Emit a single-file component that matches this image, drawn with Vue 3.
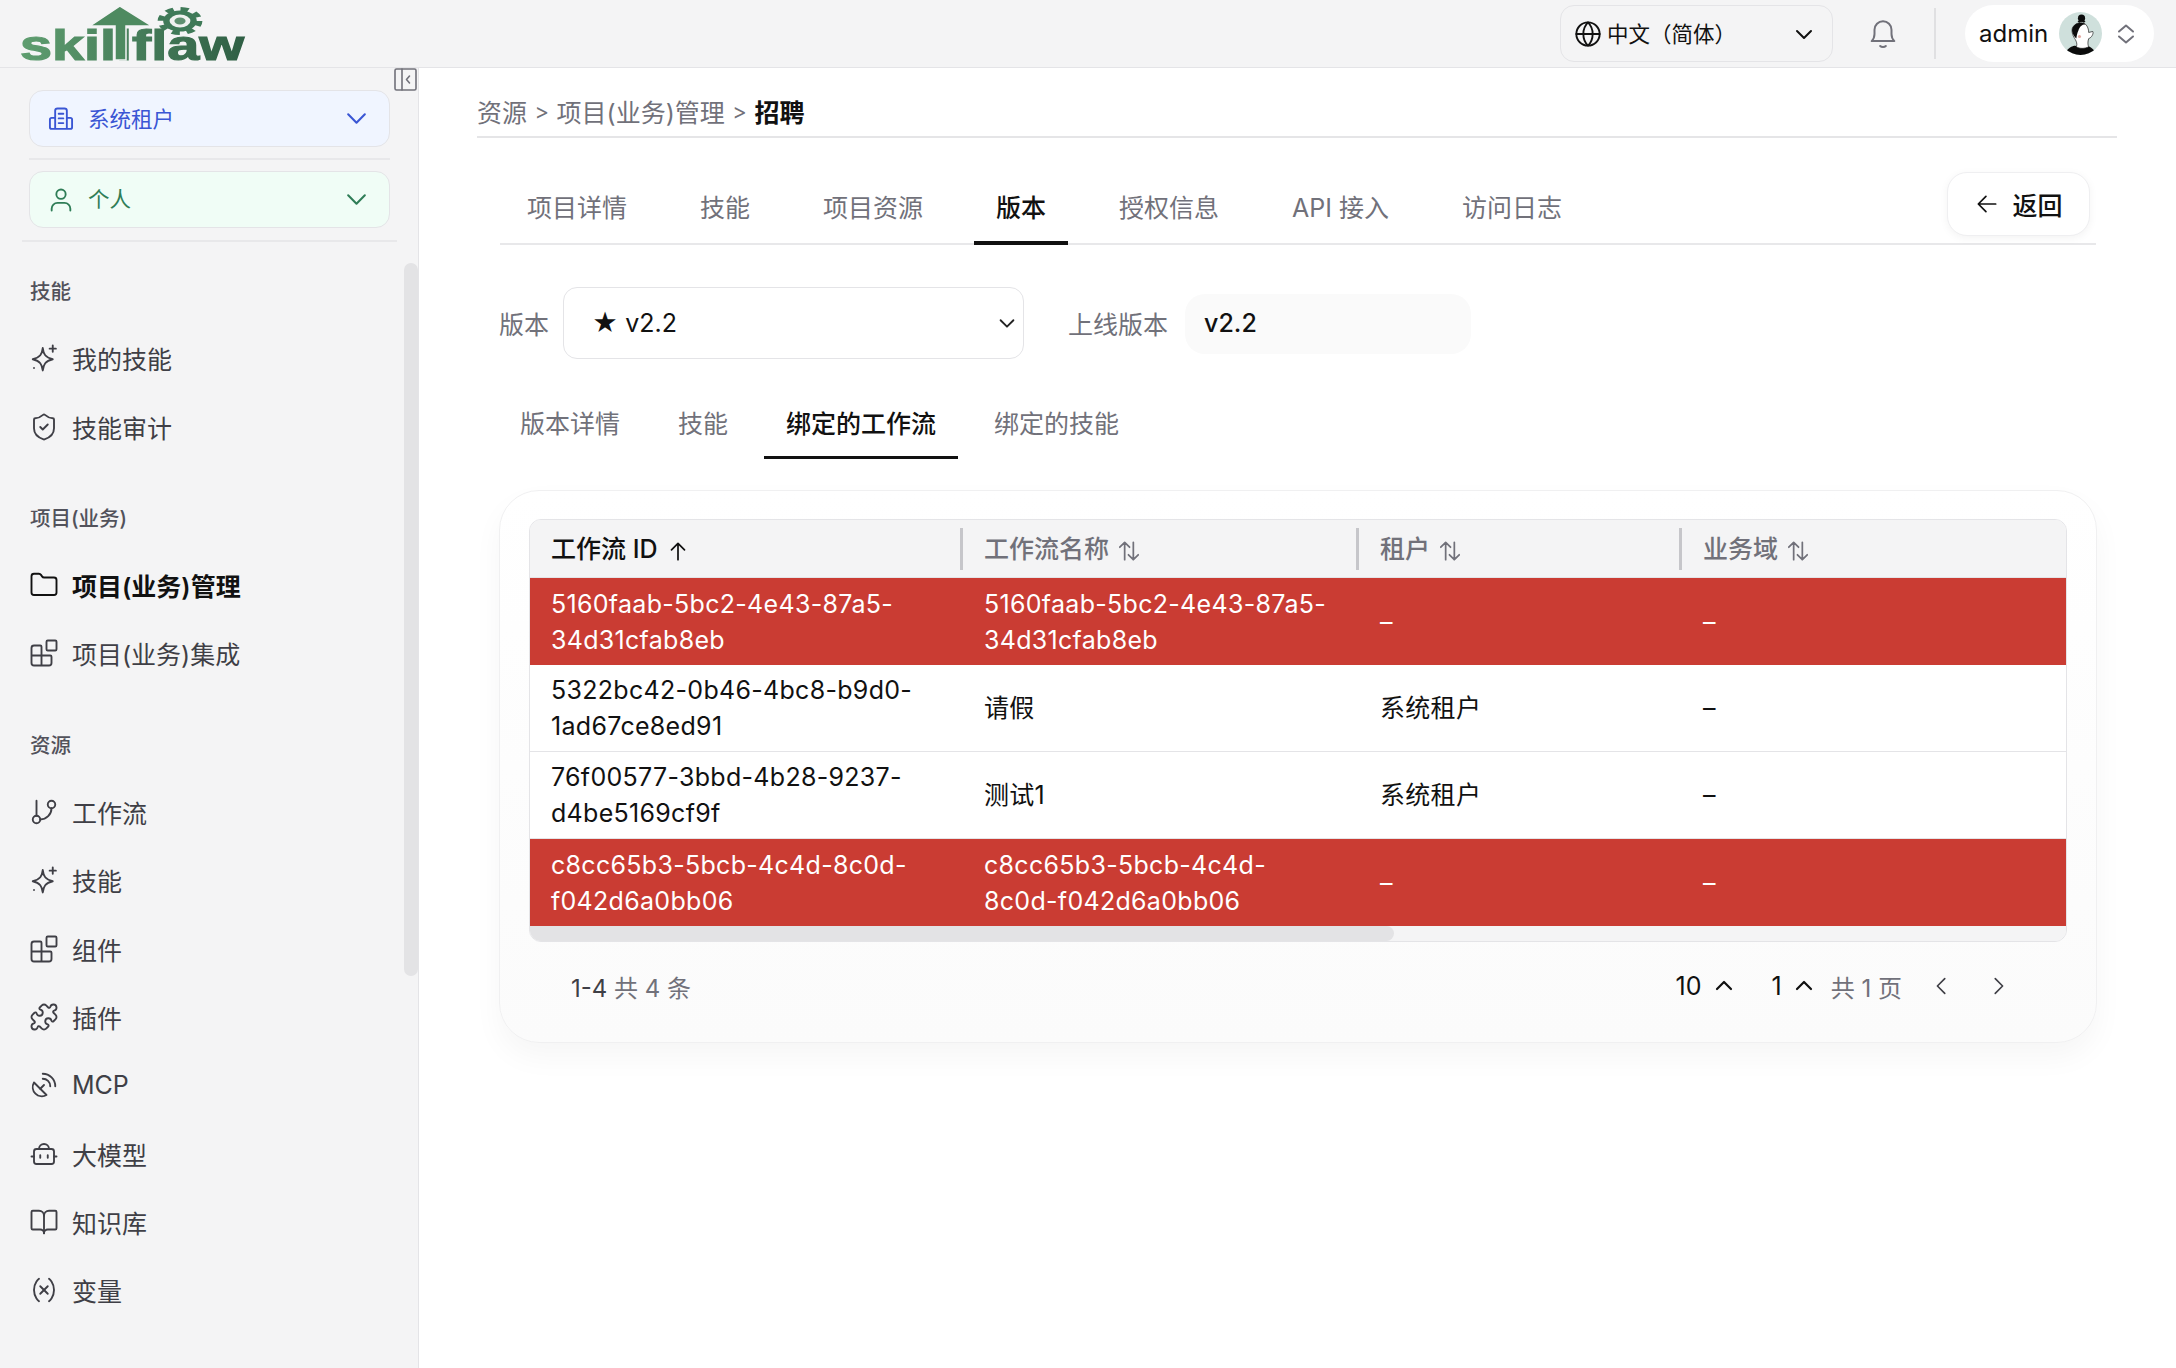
<template>
  <div class="app">
    <header class="topbar">
      <svg class="logo" viewBox="0 -6 230 70" width="230" height="70">
        <defs>
          <linearGradient id="logoFill" x1="0" x2="1" y1="0" y2="0">
            <stop offset="0" stop-color="#5f9e70" />
            <stop offset="1" stop-color="#2f5f45" />
          </linearGradient>
        </defs>
        <text x="0" y="54" class="logo-text" textLength="224" lengthAdjust="spacingAndGlyphs" fill="url(#logoFill)">skillflaw</text>
        <path d="M70 20 L100 0 L132 20 H106 V54 H95 V20Z" fill="#4e8a60" stroke="#f4f4f5" stroke-width="1.5" />
        <g transform="translate(160 15) scale(1.6 1)">
          <circle r="12" fill="none" stroke="#3f7a58" stroke-width="4" stroke-dasharray="5 4.420" />
          <circle r="10.500" fill="#3f7a58" />
          <circle r="6.500" fill="#f0f2f0" />
          <circle r="3.500" fill="#5f9070" />
        </g>
      </svg>
      <div class="top-right">
        <div class="lang">
          <svg class="ic" viewBox="0 0 24 24" width="28" height="28"><circle cx="12" cy="12" r="10" /><path d="M2 12h20M12 2c3 3 4 6.500 4 10s-1 7-4 10c-3-3-4-6.500-4-10s1-7 4-10Z" /></svg>
          <span class="lang-text">中文（简体）</span>
          <svg class="ic chev-lang" viewBox="0 0 24 24" width="24" height="24"><path d="m5 9 7 7 7-7" /></svg>
        </div>
        <svg class="ic bell" viewBox="0 0 24 24" width="34" height="34"><path d="M4 17h16c-1.500-1.500-2-3-2-5V9a6 6 0 0 0-12 0v3c0 2-.5 3.500-2 5Z" /><path d="M10 20.500c1 1 3 1 4 0" /></svg>
        <span class="top-sep"></span>
        <div class="user">
          <span class="user-name">admin</span>
          <svg class="avatar" viewBox="0 0 42 42" width="43" height="43">
            <clipPath id="avatarClip"><circle cx="21" cy="21" r="21" /></clipPath>
            <g clip-path="url(#avatarClip)">
              <rect width="42" height="42" fill="#cfe0dc" />
              <path d="M5 42c3-7 8-9 11-9 3 2 7 2 10 0 3 0 8 2 11 9Z" fill="#0b0b0b" />
              <path d="M17 34c1-3 0-5-1-7-2-3-4-7-3-11 2-5 8-7 13-4 2 2 3 5 3 8l4-1c1 2-1 6-4 7-1 3-1 6 0 8-4 2-9 2-12 0Z" fill="#fff" stroke="#222" stroke-width=".7" />
              <path d="M13 16c2-5 8-7 13-4-4 0-6 3-7 6-1 2-2 6-2 8-3-3-5-7-4-10Z" fill="#0b0b0b" />
              <circle cx="22" cy="6" r="3.500" fill="#0b0b0b" />
              <path d="M19 10c1-2 5-2 6 0" stroke="#0b0b0b" stroke-width="2" fill="none" />
              <circle cx="20" cy="24" r="1.500" fill="#e2a9a0" />
            </g>
          </svg>
          <svg class="ic updown" viewBox="0 0 24 24" width="24" height="24"><path d="m5 9.500 7-6 7 6M5 14.500l7 6 7-6" /></svg>
        </div>
      </div>
    </header>

    <div class="body">
      <aside class="sidebar">
        <button class="collapse" type="button">
          <svg class="ic" viewBox="0 0 23 23" width="23" height="23"><rect x="1" y="1" width="21" height="21" rx="1.500" /><path d="M8 1v21M15.500 8l-3 3.500 3 3.500" /></svg>
        </button>
        <div class="scope scope-blue">
          <svg class="ic" viewBox="0 0 24 24" width="28" height="28"><path d="M7 20V5a2 2 0 0 1 2-2h6a2 2 0 0 1 2 2v15M7 11H4a1.500 1.500 0 0 0-1.500 1.500V19A1.500 1.500 0 0 0 4 20.500h16a1.500 1.500 0 0 0 1.500-1.500v-6.500A1.500 1.500 0 0 0 20 11h-3M10 7.500h4M10 11.500h4M10 15.500h4" /></svg>
          <span class="scope-name">系统租户</span>
          <svg class="ic scope-chev" viewBox="0 0 24 24" width="25" height="25"><path d="m4 8 8 8 8-8" /></svg>
        </div>
        <div class="side-line"></div>
        <div class="scope scope-green">
          <svg class="ic" viewBox="0 0 24 24" width="28" height="28"><circle cx="12" cy="7" r="4" /><path d="M4 21v-1.500a5 5 0 0 1 5-5h6a5 5 0 0 1 5 5V21" /></svg>
          <span class="scope-name">个人</span>
          <svg class="ic scope-chev" viewBox="0 0 24 24" width="25" height="25"><path d="m4 8 8 8 8-8" /></svg>
        </div>
        <div class="side-line wide"></div>

        <nav class="nav">
          <section v-for="group in navGroups" :key="group.title" class="nav-group">
            <div class="nav-title">{{ group.title }}</div>
            <div v-for="item in group.items" :key="item.label" class="nav-item" :class="{ active: item.active }">
              <svg class="ic nav-ic" viewBox="0 0 24 24" width="30" height="30">
                <path v-for="d in icons[item.icon]" :key="d" :d="d" />
              </svg>
              <span>{{ item.label }}</span>
            </div>
          </section>
        </nav>
        <div class="side-scroll"></div>
      </aside>

      <main class="content">
        <div class="crumbs">
          <span>资源</span><i>&gt;</i><span>项目(业务)管理</span><i>&gt;</i><b>招聘</b>
        </div>

        <div class="tabs">
          <div v-for="t in mainTabs" :key="t" class="tab" :class="{ on: t === '版本' }">{{ t }}</div>
          <button class="back" type="button">
            <svg class="ic" viewBox="0 0 24 24" width="26" height="26"><path d="M20 12H5M11 5l-7 7 7 7" /></svg>
            <span>返回</span>
          </button>
        </div>

        <div class="version-row">
          <label>版本</label>
          <div class="version-select">
            <span>★ v2.2</span>
            <svg class="ic" viewBox="0 0 24 24" width="22" height="22"><path d="m5 9 7 7 7-7" /></svg>
          </div>
          <label class="online-label">上线版本</label>
          <div class="online-value">v2.2</div>
        </div>

        <div class="subtabs">
          <div v-for="t in subTabs" :key="t" class="subtab" :class="{ on: t === '绑定的工作流' }">{{ t }}</div>
        </div>

        <div class="card">
          <div class="table-wrap">
            <table>
              <colgroup>
                <col class="c1" /><col class="c2" /><col class="c3" /><col class="c4" />
              </colgroup>
              <thead>
                <tr>
                  <th v-for="(h, i) in columns" :key="h" :class="{ sorted: i === 0 }">
                    <span>{{ h }}</span>
                    <svg class="ic sort" viewBox="0 0 24 24" width="26" height="26">
                      <path v-if="i === 0" d="M12 20V5M6 11l6-6 6 6" />
                      <path v-else d="M8 20V4M3.500 8.500 8 4l4.500 4.500M16 4v16M11.500 15.500 16 20l4.500-4.500" />
                    </svg>
                  </th>
                </tr>
              </thead>
              <tbody>
                <tr v-for="row in rows" :key="row.id" :class="{ bad: row.bad }">
                  <td>{{ row.id }}</td>
                  <td>{{ row.name }}</td>
                  <td>{{ row.tenant }}</td>
                  <td>–</td>
                </tr>
              </tbody>
            </table>
            <div class="h-scroll"><div class="h-thumb"></div></div>
          </div>

          <div class="pager">
            <div class="total"><span class="range">1-4</span> 共 4 条</div>
            <div class="pager-right">
              <span class="num">10</span>
              <svg class="ic pchev" viewBox="0 0 24 24" width="24" height="24"><path d="m5 15 7-7 7 7" /></svg>
              <span class="num page-no">1</span>
              <svg class="ic pchev" viewBox="0 0 24 24" width="24" height="24"><path d="m5 15 7-7 7 7" /></svg>
              <span class="pages">共 1 页</span>
              <svg class="ic arrow prev" viewBox="0 0 24 24" width="22" height="22"><path d="m15 4-8 8 8 8" /></svg>
              <svg class="ic arrow next" viewBox="0 0 24 24" width="22" height="22"><path d="m9 4 8 8-8 8" /></svg>
            </div>
          </div>
        </div>
      </main>
    </div>
  </div>
</template>

<script setup>
const icons = {
  sparkle: ['M11 4c.6 5 2 7.500 8 9-6 1.500-7.400 4-8 9-.6-5-2-7.500-8-9 6-1.500 7.400-4 8-9Z', 'M19 2v5M16.500 4.500h5', 'M4 20h.01'],
  shield: ['M20 13c0 5-3.500 7.500-7.660 8.950a1 1 0 0 1-.67-.01C7.500 20.500 4 18 4 13V6a1 1 0 0 1 1-1c2 0 4.500-1.200 6.240-2.720a1.170 1.170 0 0 1 1.520 0C14.510 3.810 17 5 19 5a1 1 0 0 1 1 1z', 'm9 12 2 2 4-4'],
  folder: ['M20 20a2 2 0 0 0 2-2V8a2 2 0 0 0-2-2h-7.900a2 2 0 0 1-1.690-.9L9.600 3.900A2 2 0 0 0 7.930 3H4a2 2 0 0 0-2 2v13a2 2 0 0 0 2 2Z'],
  blocks: ['M10 22V7a1 1 0 0 0-1-1H4a2 2 0 0 0-2 2v12a2 2 0 0 0 2 2h12a2 2 0 0 0 2-2v-5a1 1 0 0 0-1-1H2', 'M15 2h6a1 1 0 0 1 1 1v6a1 1 0 0 1-1 1h-6a1 1 0 0 1-1-1V3a1 1 0 0 1 1-1Z'],
  branch: ['M6 3v12', 'M21 6a3 3 0 1 1-6 0 3 3 0 0 1 6 0Z', 'M9 18a3 3 0 1 1-6 0 3 3 0 0 1 6 0Z', 'M18 9a9 9 0 0 1-9 9'],
  puzzle: ['M15.390 4.390a1 1 0 0 0 1.680-.474 2.500 2.500 0 1 1 3.014 3.015 1 1 0 0 0-.474 1.680l1.683 1.682a2.414 2.414 0 0 1 0 3.414L19.610 15.390a1 1 0 0 1-1.680-.474 2.500 2.500 0 1 0-3.014 3.015 1 1 0 0 1 .474 1.680l-1.683 1.682a2.414 2.414 0 0 1-3.414 0L8.610 19.610a1 1 0 0 0-1.680.474 2.500 2.500 0 1 1-3.014-3.015 1 1 0 0 0 .474-1.680l-1.683-1.682a2.414 2.414 0 0 1 0-3.414L4.390 8.610a1 1 0 0 1 1.680.474 2.500 2.500 0 1 0 3.014-3.015 1 1 0 0 1-.474-1.680l1.683-1.682a2.414 2.414 0 0 1 3.414 0z'],
  dish: ['M4 10a7.310 7.310 0 0 0 10 10Z', 'm9 15 3-3', 'M17 13a6 6 0 0 0-6-6', 'M21 13A10 10 0 0 0 11 3'],
  bot: ['M6 8h12a2 2 0 0 1 2 2v8a2 2 0 0 1-2 2H6a2 2 0 0 1-2-2v-8a2 2 0 0 1 2-2Z', 'M2 14h2M20 14h2', 'M9 13v2M15 13v2', 'M8 8a4 4 0 0 1 8 0'],
  book: ['M12 7v14', 'M3 18a1 1 0 0 1-1-1V4a1 1 0 0 1 1-1h5a4 4 0 0 1 4 4 4 4 0 0 1 4-4h5a1 1 0 0 1 1 1v13a1 1 0 0 1-1 1h-6a3 3 0 0 0-3 3 3 3 0 0 0-3-3z'],
  variable: ['M8 21s-4-3-4-9 4-9 4-9', 'M16 3s4 3 4 9-4 9-4 9', 'm15 9-6 6', 'm9 9 6 6']
}

const navGroups = [
  {
    title: '技能',
    items: [
      { label: '我的技能', icon: 'sparkle' },
      { label: '技能审计', icon: 'shield' }
    ]
  },
  {
    title: '项目(业务)',
    items: [
      { label: '项目(业务)管理', icon: 'folder', active: true },
      { label: '项目(业务)集成', icon: 'blocks' }
    ]
  },
  {
    title: '资源',
    items: [
      { label: '工作流', icon: 'branch' },
      { label: '技能', icon: 'sparkle' },
      { label: '组件', icon: 'blocks' },
      { label: '插件', icon: 'puzzle' },
      { label: 'MCP', icon: 'dish' },
      { label: '大模型', icon: 'bot' },
      { label: '知识库', icon: 'book' },
      { label: '变量', icon: 'variable' }
    ]
  }
]

const mainTabs = ['项目详情', '技能', '项目资源', '版本', '授权信息', 'API 接入', '访问日志']
const subTabs = ['版本详情', '技能', '绑定的工作流', '绑定的技能']
const columns = ['工作流 ID', '工作流名称', '租户', '业务域']

const rows = [
  { id: '5160faab-5bc2-4e43-87a5-34d31cfab8eb', name: '5160faab-5bc2-4e43-87a5-34d31cfab8eb', tenant: '–', bad: true },
  { id: '5322bc42-0b46-4bc8-b9d0-1ad67ce8ed91', name: '请假', tenant: '系统租户' },
  { id: '76f00577-3bbd-4b28-9237-d4be5169cf9f', name: '测试1', tenant: '系统租户' },
  { id: 'c8cc65b3-5bcb-4c4d-8c0d-f042d6a0bb06', name: 'c8cc65b3-5bcb-4c4d-8c0d-f042d6a0bb06', tenant: '–', bad: true }
]
</script>

<style>
html,
body {
  margin: 0;
  background: #fff;
}
</style>

<style scoped>
.app {
  width: 2176px;
  height: 1368px;
  overflow: hidden;
  display: flex;
  flex-direction: column;
  font-family: Inter, "Noto Sans CJK SC", sans-serif;
  font-size: 24px;
  color: #111;
  background: #fff;
}

.ic {
  fill: none;
  stroke: currentColor;
  stroke-width: 1.6;
  stroke-linecap: round;
  stroke-linejoin: round;
  flex: none;
}

.topbar {
  height: 67px;
  flex: none;
  box-sizing: content-box;
  display: flex;
  align-items: center;
  justify-content: space-between;
  padding: 0 22px 0 20px;
  background: #f4f4f5;
  border-bottom: 1px solid #e4e4e7;
}

.logo {
  align-self: flex-start;
  margin-bottom: -3px;
  overflow: visible;
}

.logo-text {
  font-family: "Liberation Sans", sans-serif;
  font-weight: 700;
  font-size: 42px;
  stroke: url(#logoFill);
  stroke-width: 1.2px;
}

.top-right {
  display: flex;
  align-items: center;
}

.lang {
  width: 273px;
  height: 57px;
  box-sizing: border-box;
  display: flex;
  align-items: center;
  padding: 0 16px 0 13px;
  border: 1px solid #e4e4e7;
  border-radius: 14px;
  font-size: 21.500px;
}

.lang-text {
  margin-left: 5px;
  padding-bottom: 3px;
}

.chev-lang {
  margin-left: auto;
  stroke-width: 2;
}

.bell {
  margin-left: 33px;
  color: #71717a;
  stroke-width: 1.400;
}

.top-sep {
  width: 2px;
  height: 51px;
  margin: 0 29px 0 34px;
  background: #e0e0e2;
}

.user {
  width: 189px;
  height: 57px;
  box-sizing: border-box;
  display: flex;
  align-items: center;
  padding-left: 14px;
  border-radius: 29px;
  background: #fff;
}

.user-name {
  font-size: 24px;
}

.avatar {
  margin-left: 11px;
}

.updown {
  margin-left: 12px;
  color: #71717a;
  stroke-width: 2;
}

.body {
  flex: 1;
  display: flex;
  min-height: 0;
}

.sidebar {
  position: relative;
  width: 418px;
  flex: none;
  padding-top: 22px;
  background: #f4f4f5;
  border-right: 1px solid #e4e4e7;
  overflow: hidden;
}

.collapse {
  position: absolute;
  top: 0;
  right: 0;
  width: 24px;
  height: 24px;
  padding: 0;
  border: none;
  background: none;
  color: #71717a;
  display: flex;
}

.scope {
  height: 57px;
  box-sizing: border-box;
  margin: 0 28px 0 29px;
  display: flex;
  align-items: center;
  gap: 13px;
  padding: 0 20px 0 17px;
  border-radius: 14px;
  border: 1px solid #e4e4e7;
  font-size: 21.500px;
}

.scope-name {
  padding-bottom: 3px;
}

.scope-blue {
  background: #f0f5ff;
  color: #3a56d4;
}

.scope-green {
  background: #f0fdf6;
  color: #2f7d57;
}

.scope-green .scope-name {
  padding-bottom: 5px;
}

.scope-chev {
  margin-left: auto;
  stroke-width: 2;
}

.side-line {
  height: 2px;
  margin: 11px 28px 11px 29px;
  background: #e8e8ea;
}

.side-line.wide {
  margin: 12px 21px 0 22px;
}

.nav {
  padding: 0 0 0 29px;
}

.nav-group {
  padding-top: 32px;
  padding-bottom: 8px;
}

.nav-title {
  height: 36px;
  line-height: 36px;
  margin-bottom: 14px;
  margin-left: 1px;
  font-size: 20.500px;
  font-weight: 500;
  color: #52525b;
}

.nav-item {
  height: 68.400px;
  display: flex;
  align-items: center;
  gap: 13px;
  font-size: 25px;
  color: #3f3f46;
}

.nav-item.active {
  color: #111;
  font-weight: 600;
}

.nav-ic {
  stroke-width: 1.500;
}

.side-scroll {
  position: absolute;
  top: 195px;
  right: 0;
  width: 14px;
  height: 713px;
  border-radius: 7px;
  background: #e3e3e5;
}

.content {
  flex: 1;
  min-width: 0;
  padding: 18px 59px 0 58px;
}

.crumbs {
  height: 50px;
  display: flex;
  align-items: center;
  width: 1640px;
  margin-bottom: 0;
  border-bottom: 2px solid #e5e5e7;
  font-size: 25px;
  color: #71717a;
}

.crumbs i {
  font-style: normal;
  font-size: 22px;
  margin: 0 7.500px;
}

.crumbs b {
  color: #111;
  font-weight: 600;
}

.tabs {
  position: relative;
  height: 105px;
  margin: 0 21px 0 23px;
  padding-left: 5px;
  display: flex;
  align-items: flex-end;
  border-bottom: 2px solid #e8e8ea;
}

.tab {
  height: 70px;
  display: flex;
  align-items: center;
  padding: 0 22px 4px;
  margin-right: 29px;
  box-sizing: border-box;
  font-size: 25px;
  color: #71717a;
  margin-bottom: -2px;
  border-bottom: 4px solid transparent;
}

.tab.on {
  color: #111;
  font-weight: 500;
  border-bottom-color: #111;
}

.back {
  margin-left: auto;
  margin-right: 6px;
  margin-bottom: 7px;
  width: 143px;
  height: 64px;
  display: flex;
  align-items: center;
  justify-content: center;
  gap: 12px;
  border: 1px solid #efeff1;
  border-radius: 20px;
  background: #fff;
  box-shadow: 0 2px 8px rgba(0, 0, 0, 0.05);
  font: inherit;
  font-size: 25px;
  font-weight: 500;
  color: #111;
}

.version-row {
  margin: 42px 0 0 22px;
  height: 72px;
  display: flex;
  align-items: center;
  font-size: 25px;
}

.version-row label {
  color: #71717a;
}

.version-select {
  width: 461px;
  height: 72px;
  box-sizing: border-box;
  margin-left: 14px;
  display: flex;
  align-items: center;
  justify-content: space-between;
  padding: 0 5px 0 28px;
  border: 1px solid #e4e4e7;
  border-radius: 14px;
  color: #111;
}

.version-select .ic {
  stroke-width: 2;
  color: #222;
}

.online-label {
  margin-left: 44px;
}

.online-value {
  width: 286px;
  height: 60px;
  box-sizing: border-box;
  display: flex;
  align-items: center;
  padding-left: 19px;
  margin-left: 17px;
  margin-top: 2px;
  padding-bottom: 2px;
  border-radius: 20px;
  background: #fafafa;
  font-weight: 500;
}

.subtabs {
  margin: 29px 0 0 21px;
  height: 71px;
  display: flex;
}

.subtab {
  height: 71px;
  box-sizing: border-box;
  display: flex;
  align-items: center;
  padding: 0 22px 1px;
  margin-right: 14px;
  font-size: 25px;
  color: #71717a;
  border-bottom: 3px solid transparent;
}

.subtab.on {
  color: #111;
  font-weight: 500;
  border-bottom-color: #111;
}

.card {
  margin: 31px 0 0 22px;
  width: 1598px;
  height: 553px;
  box-sizing: border-box;
  padding: 28px 29px 0 29px;
  border: 1px solid #f0f0f1;
  border-radius: 40px;
  background: linear-gradient(#fff, #fbfbfb);
  box-shadow: 0 14px 30px rgba(0, 0, 0, 0.04);
}

.table-wrap {
  overflow: hidden;
  border: 1px solid #e4e4e7;
  border-radius: 12px;
}

table {
  width: 1538px;
  border-collapse: separate;
  border-spacing: 0;
  table-layout: fixed;
}

.c1 { width: 431px; }
.c2 { width: 396px; }
.c3 { width: 323px; }
.c4 { width: 388px; }

th {
  position: relative;
  height: 58px;
  padding: 0 0 4px 23px;
  box-sizing: border-box;
  text-align: left;
  background: #f4f4f5;
  border-bottom: 1px solid #e4e4e7;
  font-size: 25px;
  font-weight: 500;
  color: #71717a;
  white-space: nowrap;
}

th:first-child,
td:first-child {
  padding-left: 21px;
}

th.sorted {
  color: #111;
}

th + th::before {
  content: "";
  position: absolute;
  left: -1px;
  top: 8px;
  height: 42px;
  width: 3px;
  background: #c6c6ca;
}

.sort {
  margin-left: 7px;
  vertical-align: -6px;
}

td {
  height: 87px;
  box-sizing: border-box;
  padding: 7px 23px 7px 23px;
  line-height: 36px;
  font-size: 25px;
  letter-spacing: 0.3px;
  color: #111;
  background: #fff;
  border-bottom: 1px solid #e4e4e7;
}

tr.bad td {
  background: #ca3c33;
  color: #fff;
  border-bottom: none;
}

.h-scroll {
  height: 15px;
  background: #f4f4f5;
}

.h-thumb {
  width: 864px;
  height: 15px;
  border-radius: 0 8px 8px 0;
  background: #e3e3e5;
}

.pager {
  height: 88px;
  display: flex;
  align-items: center;
  justify-content: space-between;
  padding: 0 0 0 42px;
  font-size: 24px;
}

.total {
  color: #71717a;
}

.range {
  color: #3f3f46;
}

.pager-right {
  display: flex;
  align-items: center;
  margin-right: 58px;
}

.num {
  font-size: 25px;
}

.pchev {
  margin-left: 10px;
  stroke-width: 2.200;
}

.page-no {
  margin-left: 36px;
}

.pages {
  margin-left: 15px;
  color: #71717a;
}

.arrow {
  color: #3f3f46;
  stroke-width: 1.800;
}

.prev {
  margin-left: 29px;
}

.next {
  margin-left: 34px;
}
</style>
